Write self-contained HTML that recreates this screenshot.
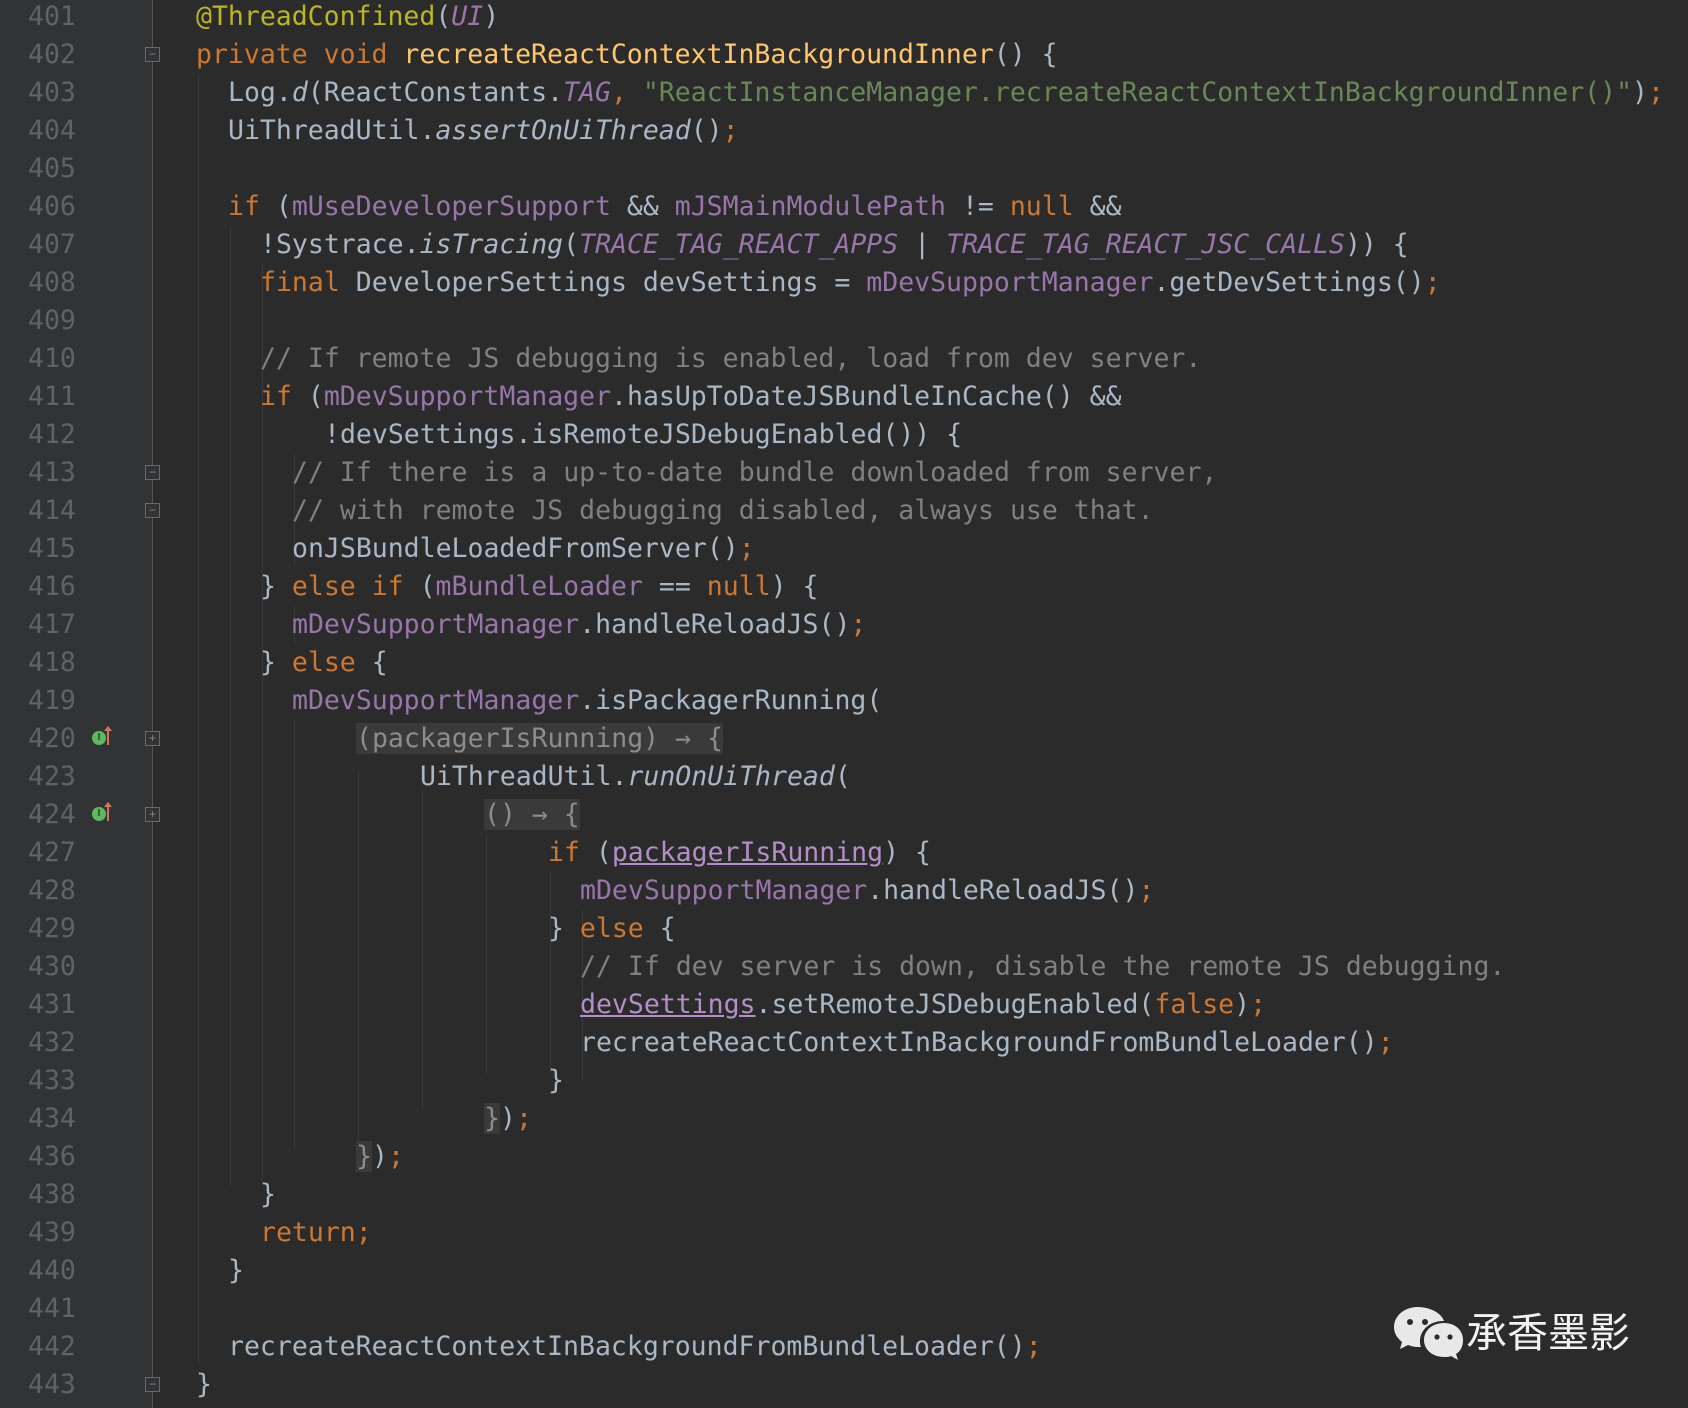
<!DOCTYPE html>
<html><head><meta charset="utf-8"><style>
html,body{margin:0;padding:0;}
body{width:1688px;height:1408px;background:#2b2b2b;position:relative;overflow:hidden;font-family:"DejaVu Sans Mono","Liberation Mono",monospace;font-size:26.5px;color:#a9b7c6;}
.gut{position:absolute;left:0;top:0;width:152px;height:1408px;background:#313335;}
.gl{position:absolute;left:152px;top:0;width:1px;height:1408px;background:#555;}
.n{position:absolute;left:28px;width:52px;color:#606366;line-height:38px;height:38px;}
.l{position:absolute;line-height:38px;height:38px;white-space:pre;}
.k{color:#cc7832}.f{color:#9876aa}.s{color:#6a8759}.m{color:#ffc66d}.a{color:#bbb529}.c{color:#808080}.i{font-style:italic}
.u{color:#b48ec6;text-decoration:underline}
.fold{background:#3a3a3a;color:#8c8c8c}
.g{position:absolute;width:1px;background:#3a3a3a;}
.fb{position:absolute;left:145px;width:13px;height:13px;border:1px solid #6a6a6a;background:#313335;color:#888;font-size:12px;line-height:13px;text-align:center;font-family:"Liberation Sans",sans-serif}
.ic{position:absolute;left:92px;width:14px;height:14px;border-radius:50%;background:#5fb760;color:#1d4a1e;font-size:10px;line-height:14px;text-align:center;font-family:"Liberation Sans",sans-serif;font-weight:bold}
.ar{position:absolute;left:107px;width:2px;height:16px;background:#d8745e}
.ar:before{content:"";position:absolute;left:-3px;top:-3px;border-left:4px solid transparent;border-right:4px solid transparent;border-bottom:5px solid #d8745e}
</style></head><body>
<div class="gut"></div><div class="gl"></div>
<div class="g" style="left:198px;top:74px;height:1290px"></div>
<div class="g" style="left:230px;top:226px;height:960px"></div>
<div class="g" style="left:262px;top:264px;height:920px"></div>
<div class="g" style="left:294px;top:606px;height:38px"></div>
<div class="g" style="left:294px;top:454px;height:112px"></div>
<div class="g" style="left:294px;top:720px;height:430px"></div>
<div class="g" style="left:358px;top:770px;height:380px"></div>
<div class="g" style="left:422px;top:790px;height:320px"></div>
<div class="g" style="left:486px;top:834px;height:240px"></div>
<div class="g" style="left:550px;top:872px;height:200px"></div>
<div class="g" style="left:582px;top:910px;height:170px"></div>

<div class="n" style="top:-2px">401</div><div class="l" style="top:-2px;left:196px"><span class="a">@ThreadConfined</span>(<span class="f i">UI</span>)</div>
<div class="n" style="top:36px">402</div><div class="l" style="top:36px;left:196px"><span class="k">private void </span><span class="m">recreateReactContextInBackgroundInner</span>() {</div>
<div class="n" style="top:74px">403</div><div class="l" style="top:74px;left:228px">Log.<span class="i">d</span>(ReactConstants.<span class="f i">TAG</span><span class="k">, </span><span class="s">"ReactInstanceManager.recreateReactContextInBackgroundInner()"</span>)<span class="k">;</span></div>
<div class="n" style="top:112px">404</div><div class="l" style="top:112px;left:228px">UiThreadUtil.<span class="i">assertOnUiThread</span>()<span class="k">;</span></div>
<div class="n" style="top:150px">405</div>
<div class="n" style="top:188px">406</div><div class="l" style="top:188px;left:228px"><span class="k">if </span>(<span class="f">mUseDeveloperSupport</span> &amp;&amp; <span class="f">mJSMainModulePath</span> != <span class="k">null</span> &amp;&amp;</div>
<div class="n" style="top:226px">407</div><div class="l" style="top:226px;left:260px">!Systrace.<span class="i">isTracing</span>(<span class="f i">TRACE_TAG_REACT_APPS</span> | <span class="f i">TRACE_TAG_REACT_JSC_CALLS</span>)) {</div>
<div class="n" style="top:264px">408</div><div class="l" style="top:264px;left:260px"><span class="k">final </span>DeveloperSettings devSettings = <span class="f">mDevSupportManager</span>.getDevSettings()<span class="k">;</span></div>
<div class="n" style="top:302px">409</div>
<div class="n" style="top:340px">410</div><div class="l" style="top:340px;left:260px"><span class="c">// If remote JS debugging is enabled, load from dev server.</span></div>
<div class="n" style="top:378px">411</div><div class="l" style="top:378px;left:260px"><span class="k">if </span>(<span class="f">mDevSupportManager</span>.hasUpToDateJSBundleInCache() &amp;&amp;</div>
<div class="n" style="top:416px">412</div><div class="l" style="top:416px;left:324px">!devSettings.isRemoteJSDebugEnabled()) {</div>
<div class="n" style="top:454px">413</div><div class="l" style="top:454px;left:292px"><span class="c">// If there is a up-to-date bundle downloaded from server,</span></div>
<div class="n" style="top:492px">414</div><div class="l" style="top:492px;left:292px"><span class="c">// with remote JS debugging disabled, always use that.</span></div>
<div class="n" style="top:530px">415</div><div class="l" style="top:530px;left:292px">onJSBundleLoadedFromServer()<span class="k">;</span></div>
<div class="n" style="top:568px">416</div><div class="l" style="top:568px;left:260px">} <span class="k">else if </span>(<span class="f">mBundleLoader</span> == <span class="k">null</span>) {</div>
<div class="n" style="top:606px">417</div><div class="l" style="top:606px;left:292px"><span class="f">mDevSupportManager</span>.handleReloadJS()<span class="k">;</span></div>
<div class="n" style="top:644px">418</div><div class="l" style="top:644px;left:260px">} <span class="k">else </span>{</div>
<div class="n" style="top:682px">419</div><div class="l" style="top:682px;left:292px"><span class="f">mDevSupportManager</span>.isPackagerRunning(</div>
<div class="n" style="top:720px">420</div><div class="l" style="top:720px;left:356px"><span class="fold">(packagerIsRunning) → {</span></div>
<div class="n" style="top:758px">423</div><div class="l" style="top:758px;left:420px">UiThreadUtil.<span class="i">runOnUiThread</span>(</div>
<div class="n" style="top:796px">424</div><div class="l" style="top:796px;left:484px"><span class="fold">() → {</span></div>
<div class="n" style="top:834px">427</div><div class="l" style="top:834px;left:548px"><span class="k">if </span>(<span class="u">packagerIsRunning</span>) {</div>
<div class="n" style="top:872px">428</div><div class="l" style="top:872px;left:580px"><span class="f">mDevSupportManager</span>.handleReloadJS()<span class="k">;</span></div>
<div class="n" style="top:910px">429</div><div class="l" style="top:910px;left:548px">} <span class="k">else </span>{</div>
<div class="n" style="top:948px">430</div><div class="l" style="top:948px;left:580px"><span class="c">// If dev server is down, disable the remote JS debugging.</span></div>
<div class="n" style="top:986px">431</div><div class="l" style="top:986px;left:580px"><span class="u">devSettings</span>.setRemoteJSDebugEnabled(<span class="k">false</span>)<span class="k">;</span></div>
<div class="n" style="top:1024px">432</div><div class="l" style="top:1024px;left:580px">recreateReactContextInBackgroundFromBundleLoader()<span class="k">;</span></div>
<div class="n" style="top:1062px">433</div><div class="l" style="top:1062px;left:548px">}</div>
<div class="n" style="top:1100px">434</div><div class="l" style="top:1100px;left:484px"><span class="fold">}</span>)<span class="k">;</span></div>
<div class="n" style="top:1138px">436</div><div class="l" style="top:1138px;left:356px"><span class="fold">}</span>)<span class="k">;</span></div>
<div class="n" style="top:1176px">438</div><div class="l" style="top:1176px;left:260px">}</div>
<div class="n" style="top:1214px">439</div><div class="l" style="top:1214px;left:260px"><span class="k">return;</span></div>
<div class="n" style="top:1252px">440</div><div class="l" style="top:1252px;left:228px">}</div>
<div class="n" style="top:1290px">441</div>
<div class="n" style="top:1328px">442</div><div class="l" style="top:1328px;left:228px">recreateReactContextInBackgroundFromBundleLoader()<span class="k">;</span></div>
<div class="n" style="top:1366px">443</div><div class="l" style="top:1366px;left:196px">}</div>

<div class="fb" style="top:47px">−</div>
<div class="fb" style="top:465px">−</div>
<div class="fb" style="top:503px">−</div>
<div class="fb" style="top:731px">+</div>
<div class="fb" style="top:807px">+</div>
<div class="fb" style="top:1377px">−</div>
<div class="ic" style="top:731px">I</div><div class="ar" style="top:729px"></div>
<div class="ic" style="top:807px">I</div><div class="ar" style="top:805px"></div>

<svg style="position:absolute;left:1392px;top:1305px" width="72" height="56" viewBox="0 0 72 56">
<path d="M26 2C12 2 2 11 2 22c0 6 3 11 8 15l-2 7 8-4c3 1 6 2 10 2 1 0 2 0 3 0-1-2-1-4-1-6 0-11 10-20 23-20h1C50 9 39 2 26 2z" fill="#e8e8e8"/>
<circle cx="18" cy="17" r="3" fill="#2b2b2b"/><circle cx="33" cy="17" r="3" fill="#2b2b2b"/>
<path d="M52 18c-11 0-20 7-20 17s9 17 20 17c3 0 5 0 7-1l7 4-2-6c5-3 7-8 7-14 0-10-8-17-19-17z" fill="#e8e8e8"/>
<circle cx="45" cy="32" r="2.6" fill="#2b2b2b"/><circle cx="58" cy="32" r="2.6" fill="#2b2b2b"/>
</svg>
<div style="position:absolute;left:1466px;top:1308px;font-family:'Liberation Sans','Noto Sans CJK SC',sans-serif;font-size:41px;line-height:50px;color:#f2f2f2">承香墨影</div>
</body></html>
